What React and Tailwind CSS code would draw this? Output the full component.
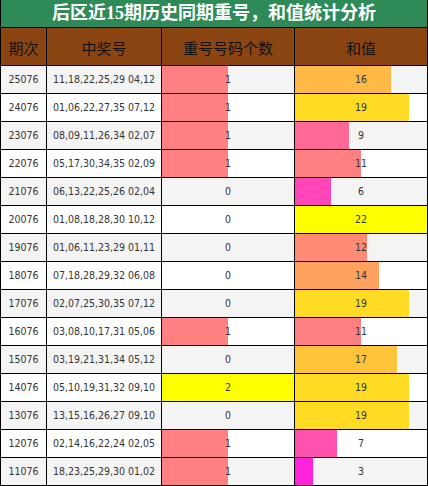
import React from 'react';

const rows = [
  ['25076', '11,18,22,25,29 04,12', 1, 16],
  ['24076', '01,06,22,27,35 07,12', 1, 19],
  ['23076', '08,09,11,26,34 02,07', 1, 9],
  ['22076', '05,17,30,34,35 02,09', 1, 11],
  ['21076', '06,13,22,25,26 02,04', 0, 6],
  ['20076', '01,08,18,28,30 10,12', 0, 22],
  ['19076', '01,06,11,23,29 01,11', 0, 12],
  ['18076', '07,18,28,29,32 06,08', 0, 14],
  ['17076', '02,07,25,30,35 07,12', 0, 19],
  ['16076', '03,08,10,17,31 05,06', 1, 11],
  ['15076', '03,19,21,31,34 05,12', 0, 17],
  ['14076', '05,10,19,31,32 09,10', 2, 19],
  ['13076', '13,15,16,26,27 09,10', 0, 19],
  ['12076', '02,14,16,22,24 02,05', 1, 7],
  ['11076', '18,23,25,29,30 01,02', 1, 3],
];

// magenta -> salmon -> yellow scale
const scaleColor = (v, max) => {
  const t = v / max;
  return `rgb(255, ${Math.round(255 * t)}, ${Math.round(255 * (1 - t))})`;
};

const BarCell = ({ value, max, last }) => (
  <div className={`relative h-full ${last ? '' : 'border-r border-black'}`}>
    {value > 0 && (
      <div
        className="absolute left-0 top-0 h-full"
        style={{ width: `${(value / max) * 100}%`, backgroundColor: scaleColor(value, max) }}
      />
    )}
    <span className="relative flex h-full items-center justify-center">{value}</span>
  </div>
);

export default function App() {
  return (
    <div className="w-[428px] border-x border-black bg-white">
      {/* title */}
      <div className="flex h-[28px] items-center justify-center border-b border-black bg-[#2e8b57] text-[18px] font-bold text-white [font-family:'Liberation_Serif','Noto_Sans_CJK_SC',serif]">
        后区近15期历史同期重号，和值统计分析
      </div>

      {/* header */}
      <div className="grid h-[38px] grid-cols-[46px_115px_133px_132px] border-b border-black bg-[#8b4513] text-[15px] text-[#111] [font-family:'Noto_Sans_CJK_SC',sans-serif]">
        <div className="flex items-center justify-center border-r border-black pt-[3px]">期次</div>
        <div className="flex items-center justify-center border-r border-black pt-[3px]">中奖号</div>
        <div className="flex items-center justify-center border-r border-black pt-[3px]">重号号码个数</div>
        <div className="flex items-center justify-center pt-[3px]">和值</div>
      </div>

      {/* rows */}
      {rows.map(([issue, nums, repeat, sum], i) => (
        <div
          key={issue}
          className={`grid h-[28px] grid-cols-[46px_115px_133px_132px] border-b border-black text-[10.5px] text-[#333] [font-family:'DejaVu_Sans_Condensed','DejaVu_Sans',sans-serif] ${
            i % 2 === 0 ? 'bg-[#f4f4f4]' : 'bg-white'
          }`}
        >
          <div className="flex items-center justify-center border-r border-black">{issue}</div>
          <div className="flex items-center justify-center border-r border-black">{nums}</div>
          <BarCell value={repeat} max={2} />
          <BarCell value={sum} max={22} last />
        </div>
      ))}
    </div>
  );
}
